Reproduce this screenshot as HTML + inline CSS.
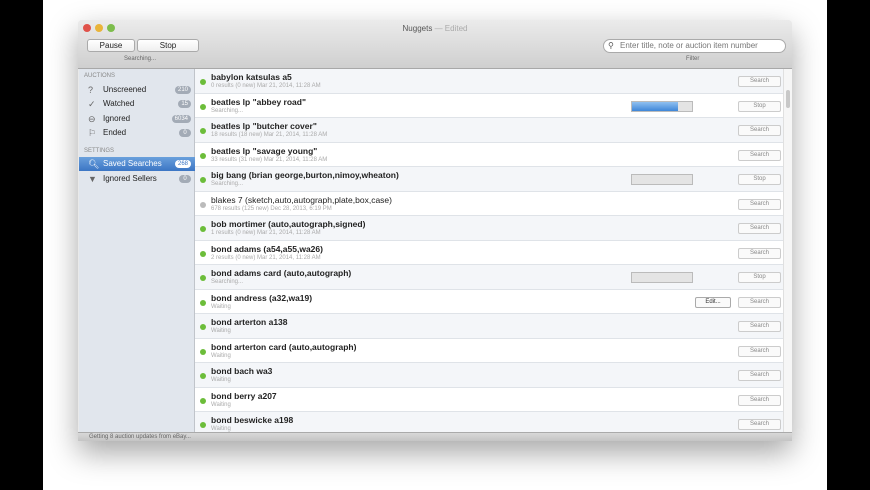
<!DOCTYPE html>
<html><head><meta charset="utf-8"><style>
*{margin:0;padding:0;box-sizing:border-box}
body{width:870px;height:490px;background:#000;font-family:"Liberation Sans",sans-serif;position:relative;overflow:hidden}
.bg{position:absolute;left:43px;top:0;width:784px;height:490px;background:#fff}
.win{position:absolute;left:78px;top:20px;width:714px;height:421px;background:#e9e9e9;box-shadow:0 12px 30px rgba(0,0,0,.35);border-radius:4px 4px 0 0;overflow:hidden}
.tb{position:absolute;left:0;top:0;width:714px;height:49px;background:linear-gradient(#ebebeb,#cfcfcf);border-bottom:1px solid #a8a8a8}
.dot{position:absolute;top:4px;width:8px;height:8px;border-radius:50%}
.title{position:absolute;top:4px;left:0;width:714px;text-align:center;font-size:8px;color:#555}
.btn{position:absolute;height:13px;background:linear-gradient(#fff,#efefef);border:1px solid #aaa;border-radius:3px;font-size:8px;text-align:center;line-height:11px;color:#222}
.small{position:absolute;font-size:6px;color:#666}
.search{position:absolute;left:525px;top:19px;width:183px;height:14px;background:#fff;border:1px solid #aaa;border-radius:7px;font-size:8px;color:#777;line-height:12px;padding-left:16px}
.side{position:absolute;left:1px;top:49px;width:116px;height:363px;background:#e1e6ed;border-right:1px solid #c0c4ca}
.sh{position:absolute;left:5px;font-size:6px;color:#888}
.si{position:absolute;left:0;width:116px;height:14px;font-size:8px;color:#222;line-height:14px;padding-left:24px}
.si .ic{position:absolute;left:9px;top:0;font-size:9px;color:#666}
.si .b{position:absolute;right:4px;top:3px;height:8px;min-width:12px;padding:0 3px;border-radius:4px;background:#a3abb6;color:#fff;font-size:6px;line-height:8px;text-align:center}
.sel{background:linear-gradient(#6aa0dc,#3b75c4);color:#fff}
.sel .ic{color:#fff}.sel .b{background:#fff;color:#3b75c4}
.list{position:absolute;left:117px;top:49px;width:588px;height:363px;overflow:hidden;background:#fff}
.row{position:absolute;left:0;width:588px;height:24.5px;border-bottom:1px solid #dfe3e8}
.row.a{background:#f4f6f9}
.g{position:absolute;left:5px;top:10px;width:6px;height:6px;border-radius:50%;background:#6cbd3a}
.g.gr{background:#bbb}
.t{position:absolute;left:16px;top:3px;font-size:8.5px;font-weight:bold;color:#222;white-space:nowrap}
.t.n{font-weight:normal}
.s{position:absolute;left:16px;top:14px;font-size:6px;color:#aaa;white-space:nowrap}
.rb{position:absolute;left:543px;top:7px;width:43px;height:11px;border:1px solid #ccc;border-radius:2px;background:#fafafa;font-size:6px;color:#888;text-align:center;line-height:9px}
.pb{position:absolute;left:436px;top:7px;width:62px;height:11px;border:1px solid #bbb;background:#e4e4e4}
.scroll{position:absolute;left:705px;top:49px;width:9px;height:363px;background:#f6f6f6;border-left:1px solid #e0e0e0}
.status{position:absolute;left:0;top:412px;width:714px;height:9px;background:linear-gradient(#d8d8d8,#c4c4c4);border-top:1px solid #aaa;font-size:6px;color:#666;padding-left:11px;line-height:8px}
</style></head><body>
<div class="bg"></div>
<div class="win">
 <div class="tb">
  <div class="dot" style="left:5px;background:#e0524a"></div>
  <div class="dot" style="left:17px;background:#e9b43a"></div>
  <div class="dot" style="left:29px;background:#7dbd4c"></div>
  <div class="title">Nuggets <span style="color:#aaa">— Edited</span></div>
  <div class="btn" style="left:9px;top:19px;width:48px">Pause</div>
  <div class="btn" style="left:59px;top:19px;width:62px">Stop</div>
  <div class="small" style="left:46px;top:36px">Searching...</div>
  <div class="search"><span style="position:absolute;left:4px;top:0;color:#555">⚲</span>Enter title, note or auction item number</div>
  <div class="small" style="left:608px;top:36px">Filter</div>
 </div>
 <div class="side">
  <div class="sh" style="top:4px">AUCTIONS</div>
  <div class="si" style="top:14px"><span class="ic">?</span>Unscreened<span class="b">210</span></div>
  <div class="si" style="top:28px"><span class="ic">✓</span>Watched<span class="b">15</span></div>
  <div class="si" style="top:43px"><span class="ic">⊖</span>Ignored<span class="b">6034</span></div>
  <div class="si" style="top:57px"><span class="ic">⚐</span>Ended<span class="b">0</span></div>
  <div class="sh" style="top:79px">SETTINGS</div>
  <div class="si sel" style="top:88px"><span class="ic">🔍︎</span>Saved Searches<span class="b">268</span></div>
  <div class="si" style="top:103px"><span class="ic">▼</span>Ignored Sellers<span class="b">0</span></div>
 </div>
 <div class="list">
  <div class="row a" style="top:0"><div class="g"></div><div class="t">babylon katsulas a5</div><div class="s">0 results (0 new) Mar 21, 2014, 11:28 AM</div><div class="rb">Search</div></div>
  <div class="row" style="top:24.5px"><div class="g"></div><div class="t">beatles lp "abbey road"</div><div class="s">Searching...</div><div class="pb"><div style="width:46px;height:9px;background:linear-gradient(#8fc0f0,#3f86d8)"></div></div><div class="rb">Stop</div></div>
  <div class="row a" style="top:49px"><div class="g"></div><div class="t">beatles lp "butcher cover"</div><div class="s">18 results (18 new) Mar 21, 2014, 11:28 AM</div><div class="rb">Search</div></div>
  <div class="row" style="top:73.5px"><div class="g"></div><div class="t">beatles lp "savage young"</div><div class="s">33 results (31 new) Mar 21, 2014, 11:28 AM</div><div class="rb">Search</div></div>
  <div class="row a" style="top:98px"><div class="g"></div><div class="t">big bang (brian george,burton,nimoy,wheaton)</div><div class="s">Searching...</div><div class="pb"></div><div class="rb">Stop</div></div>
  <div class="row" style="top:122.5px"><div class="g gr"></div><div class="t n">blakes 7 (sketch,auto,autograph,plate,box,case)</div><div class="s">678 results (125 new) Dec 28, 2013, 6:19 PM</div><div class="rb">Search</div></div>
  <div class="row a" style="top:147px"><div class="g"></div><div class="t">bob mortimer (auto,autograph,signed)</div><div class="s">1 results (0 new) Mar 21, 2014, 11:28 AM</div><div class="rb">Search</div></div>
  <div class="row" style="top:171.5px"><div class="g"></div><div class="t">bond adams (a54,a55,wa26)</div><div class="s">2 results (0 new) Mar 21, 2014, 11:28 AM</div><div class="rb">Search</div></div>
  <div class="row a" style="top:196px"><div class="g"></div><div class="t">bond adams card (auto,autograph)</div><div class="s">Searching...</div><div class="pb"></div><div class="rb">Stop</div></div>
  <div class="row" style="top:220.5px"><div class="g"></div><div class="t">bond andress (a32,wa19)</div><div class="s">Waiting</div><div class="rb" style="left:500px;width:36px;color:#333;border-color:#aaa">Edit...</div><div class="rb">Search</div></div>
  <div class="row a" style="top:245px"><div class="g"></div><div class="t">bond arterton a138</div><div class="s">Waiting</div><div class="rb">Search</div></div>
  <div class="row" style="top:269.5px"><div class="g"></div><div class="t">bond arterton card (auto,autograph)</div><div class="s">Waiting</div><div class="rb">Search</div></div>
  <div class="row a" style="top:294px"><div class="g"></div><div class="t">bond bach wa3</div><div class="s">Waiting</div><div class="rb">Search</div></div>
  <div class="row" style="top:318.5px"><div class="g"></div><div class="t">bond berry a207</div><div class="s">Waiting</div><div class="rb">Search</div></div>
  <div class="row a" style="top:343px"><div class="g"></div><div class="t">bond beswicke a198</div><div class="s">Waiting</div><div class="rb">Search</div></div>
 </div>
 <div class="scroll"><div style="position:absolute;left:2px;top:21px;width:4px;height:18px;border-radius:2px;background:#c8c8c8"></div></div>
 <div class="status">Getting 8 auction updates from eBay...</div>
</div>
</body></html>
